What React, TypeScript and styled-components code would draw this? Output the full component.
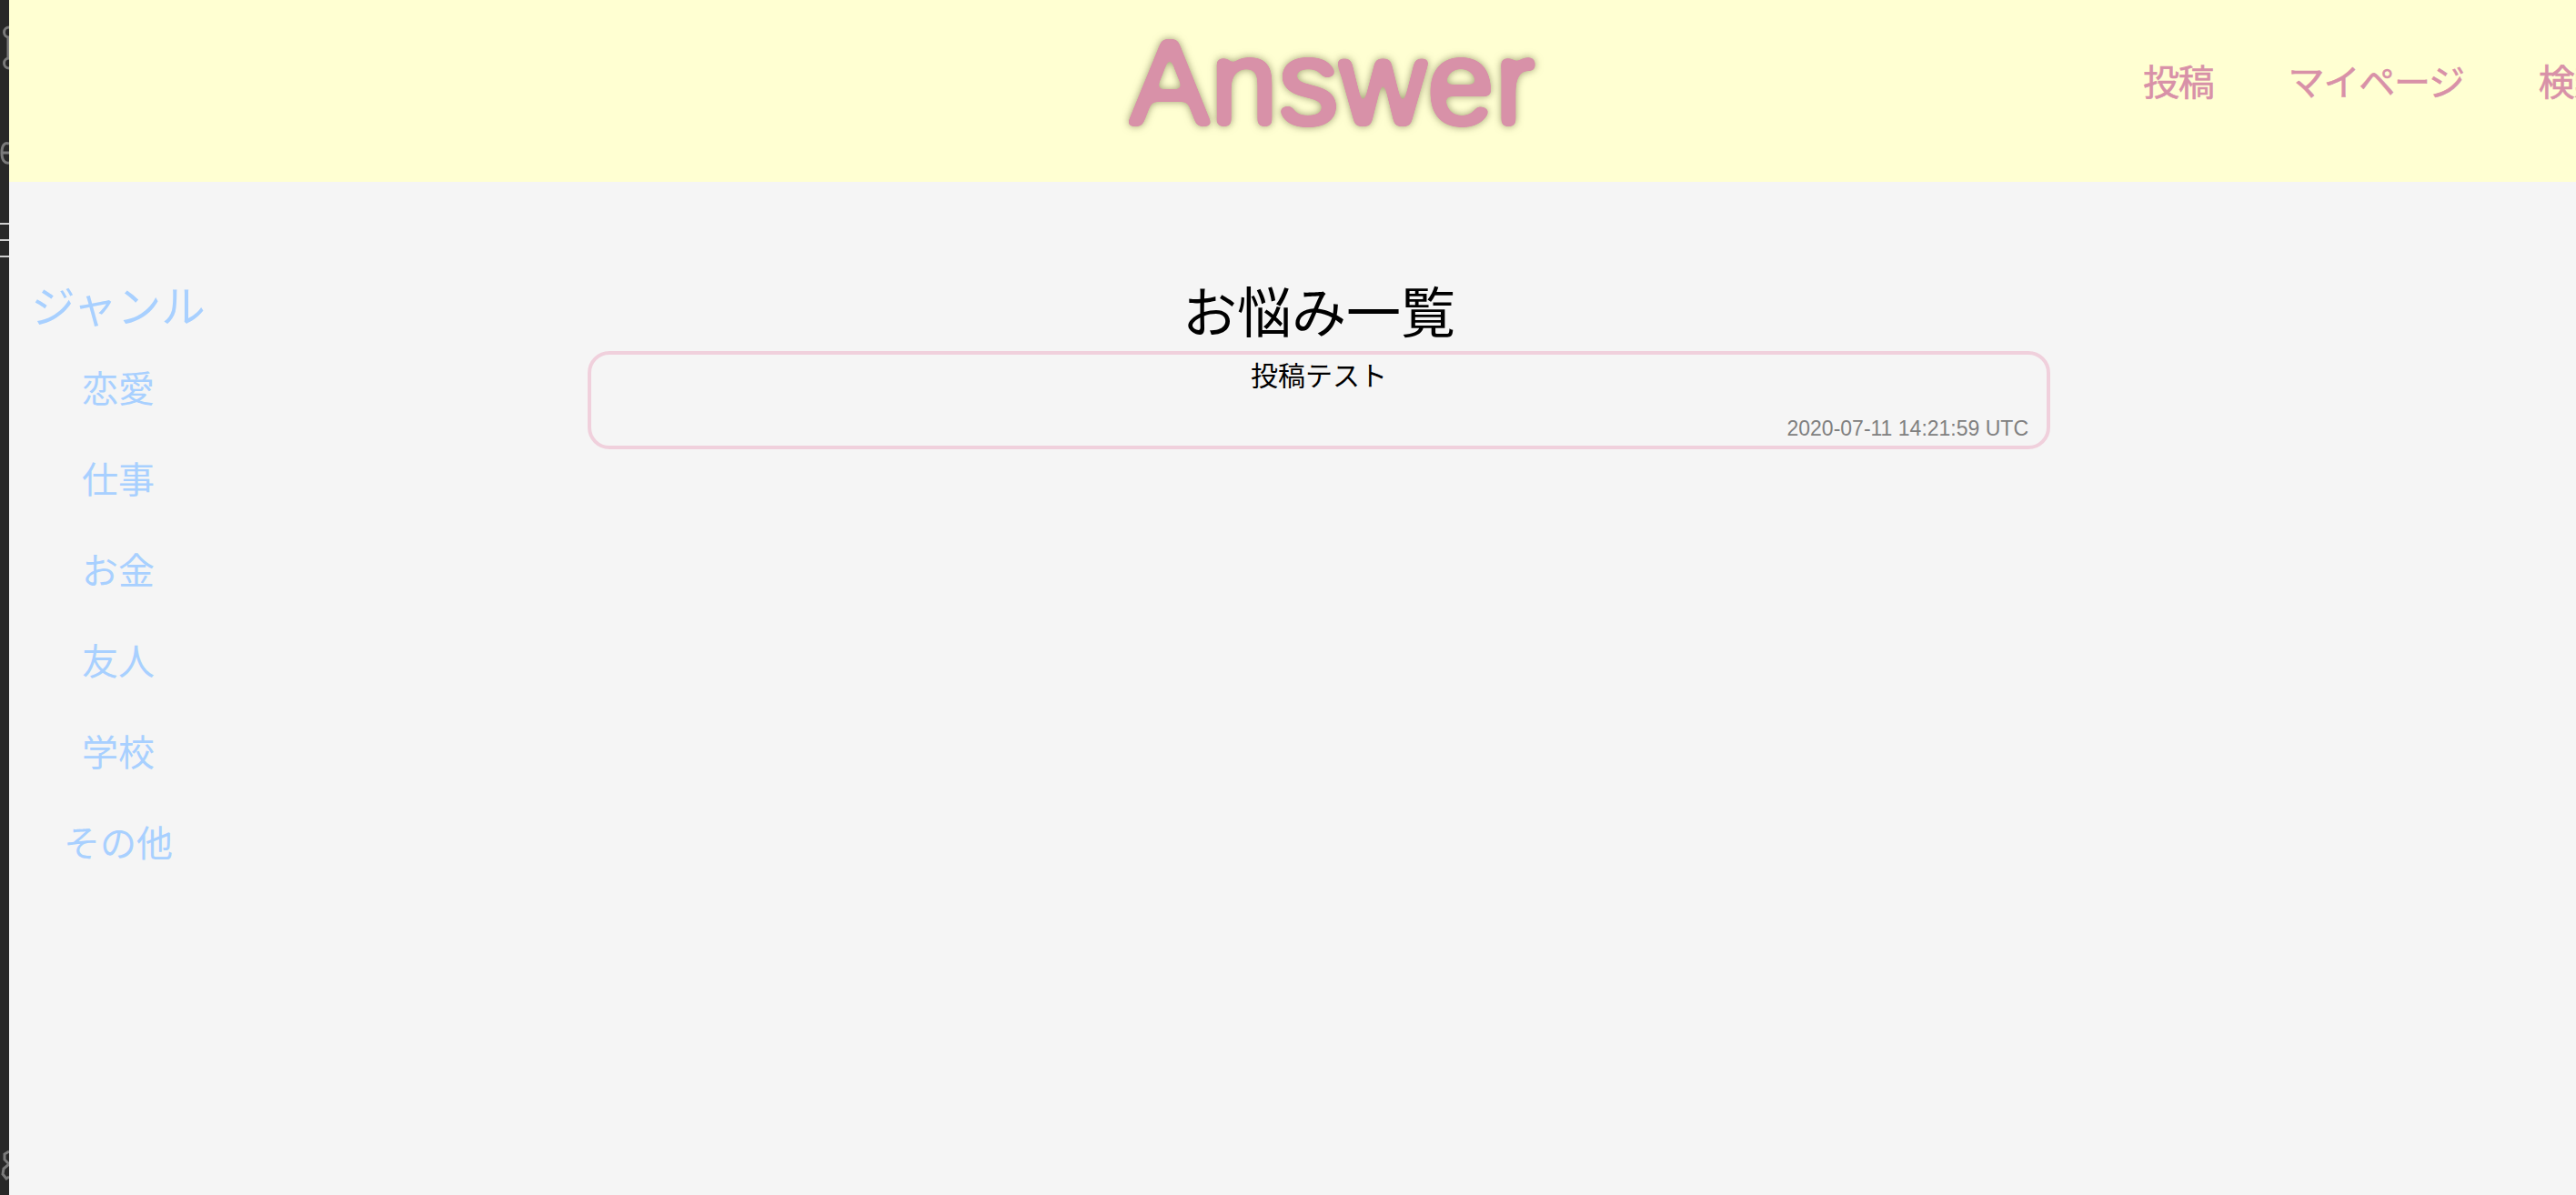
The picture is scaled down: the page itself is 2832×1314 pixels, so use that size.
import React from "react";
import styled, { createGlobalStyle } from "styled-components";

const JP = `"Liberation Sans", "Noto Sans CJK JP", sans-serif`;

const GlobalStyle = createGlobalStyle`
  html, body {
    margin: 0;
    padding: 0;
    height: 100%;
    overflow: hidden;
    background: #f5f5f5;
  }
  #root {
    height: 100%;
  }
`;

const genres = ["恋愛", "仕事", "お金", "友人", "学校", "その他"];

const App: React.FC = () => {
  return (
    <Shell>
      <GlobalStyle />
      <FilterDefs width="0" height="0">
        <filter id="logo-round" x="-10%" y="-10%" width="120%" height="120%" colorInterpolationFilters="sRGB">
          <feGaussianBlur in="SourceGraphic" stdDeviation="3.5" result="soft" />
          <feColorMatrix
            in="soft"
            type="matrix"
            values="0 0 0 0 0.847  0 0 0 0 0.569  0 0 0 0 0.659  0 0 0 14 -6"
          />
        </filter>
      </FilterDefs>
      <EditorEdge>
        <svg width="10" height="1314" viewBox="0 0 10 1314" fill="none">
          <g stroke="#7a7a7a" strokeWidth="3">
            <path d="M10 30a5.5 5.5 0 1 0 0 11" />
            <path d="M9 41v23" />
            <path d="M10 64a5.5 5.5 0 1 0 0 11" />
            <path d="M10 168H2M10 158c-5-2-8 2-8 10s3 12 8 11" />
            <path d="M10 1266l-5 3 0 6 5 5-6 5-1 6 4 5 3-2" />
          </g>
          <g stroke="#cfcfcf" strokeWidth="2">
            <path d="M0 246h10M0 264h10M0 282h10" />
          </g>
        </svg>
      </EditorEdge>
      <Page>
        <Header>
          <LogoGlow>
            <Logo>Answer</Logo>
          </LogoGlow>
          <Nav>
            <NavItem>投稿</NavItem>
            <NavItem>マイページ</NavItem>
            <NavItem>検索</NavItem>
          </Nav>
        </Header>
        <Body>
          <Sidebar>
            <SidebarTitle>ジャンル</SidebarTitle>
            <GenreList>
              {genres.map((genre) => (
                <Genre key={genre}>{genre}</Genre>
              ))}
            </GenreList>
          </Sidebar>
          <Main>
            <Title>お悩み一覧</Title>
            <PostCard>
              <PostTitle>投稿テスト</PostTitle>
              <PostDate>2020-07-11 14:21:59 UTC</PostDate>
            </PostCard>
          </Main>
        </Body>
      </Page>
    </Shell>
  );
};

export default App;

const FilterDefs = styled.svg`
  position: absolute;
`;

const Shell = styled.div`
  display: flex;
  height: 100%;
  overflow: hidden;
  font-family: ${JP};
`;

const EditorEdge = styled.div`
  flex: 0 0 10px;
  height: 1314px;
  background: #282828;
`;

const Page = styled.div`
  flex: 1;
  min-width: 0;
  background: #f5f5f5;
`;

const Header = styled.header`
  display: flex;
  align-items: center;
  height: 200px;
  padding-left: 1231px;
  background: #ffffd2;
  overflow: hidden;
  white-space: nowrap;
`;

const LogoGlow = styled.div`
  flex: none;
  width: 395px;
  margin-top: -18px;
  filter: drop-shadow(0 0 4px rgba(90, 90, 50, 0.6));
`;

const Logo = styled.div`
  font-family: "Liberation Sans", sans-serif;
  font-size: 134px;
  line-height: 1;
  color: #d891a8;
  -webkit-text-stroke: 3.5px #d891a8;
  filter: url(#logo-round);
`;

const Nav = styled.nav`
  display: flex;
  flex: none;
  gap: 82px;
  margin-left: 720px;
  margin-top: -18px;
`;

const NavItem = styled.div`
  font-size: 40px;
  line-height: 60px;
  letter-spacing: -1.2px;
  color: #d891a8;
  -webkit-text-stroke: 0.6px #d891a8;
`;

const Body = styled.div`
  display: flex;
`;

const Sidebar = styled.aside`
  flex: 0 0 240px;
  padding-top: 102px;
  text-align: center;
  color: #a8d0ff;
`;

const SidebarTitle = styled.div`
  font-size: 48.5px;
  line-height: 72px;
`;

const GenreList = styled.div`
  display: flex;
  flex-direction: column;
  margin-top: 4px;
`;

const Genre = styled.div`
  font-size: 40px;
  line-height: 100px;
`;

const Main = styled.main`
  flex: 0 0 1608px;
  margin-left: 396px;
`;

const Title = styled.h2`
  margin: 106px 0 0;
  font-size: 60px;
  font-weight: 400;
  line-height: 80px;
  text-align: center;
  color: #000;
`;

const PostCard = styled.div`
  box-sizing: border-box;
  height: 108px;
  border: 4px solid #f0d0dc;
  border-radius: 24px;
  padding: 4px 20px 0;
`;

const PostTitle = styled.div`
  font-size: 30px;
  line-height: 40px;
  text-align: center;
  color: #000;
`;

const PostDate = styled.div`
  margin-top: 20px;
  font-size: 23px;
  line-height: 34px;
  text-align: right;
  color: #808080;
`;
